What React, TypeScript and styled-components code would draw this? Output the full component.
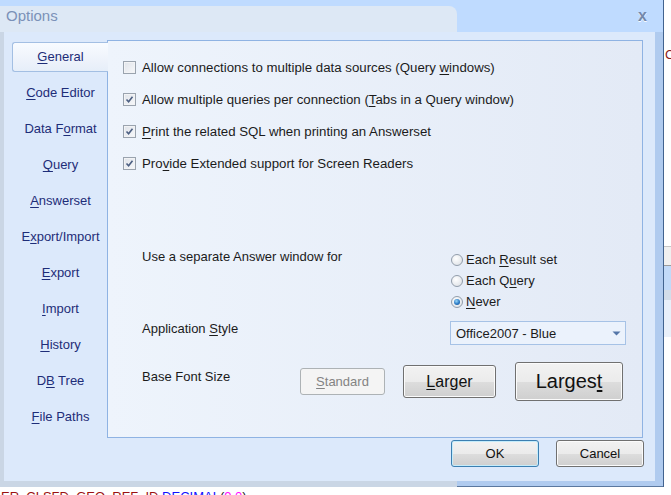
import React from "react";
import styled, { createGlobalStyle, css } from "styled-components";

const Global = createGlobalStyle`
  html, body { margin: 0; padding: 0; background: #fff; }
  body { font-family: "Liberation Sans", Arial, sans-serif; }
  #root { width: 671px; height: 495px; }
  u { text-decoration: underline; text-underline-offset: 2px; }
`;

const Page = styled.div`
  width: 671px;
  height: 495px;
  overflow: hidden;
  background: #fff;
  display: grid;
  grid-template-columns: 664px 7px;
  grid-template-rows: 487px 8px;
`;

const Dialog = styled.div`
  grid-column: 1;
  grid-row: 1;
  display: flex;
  flex-direction: column;
  border-right: 1px solid #42638f;
  box-sizing: border-box;
`;

const TitleBar = styled.div`
  height: 32px;
  flex: none;
  display: flex;
  align-items: flex-end;
  background: #bfdbff;
`;

const Caption = styled.div`
  width: 457px;
  height: 26px;
  box-sizing: border-box;
  padding-left: 6px;
  background: #dde8f5;
  border-top-right-radius: 8px;
  font-size: 15px;
  line-height: 20px;
  color: #7b91b8;
`;

const Close = styled.div`
  margin-left: auto;
  margin-right: 16px;
  align-self: center;
  font-size: 16px;
  font-weight: bold;
  line-height: 16px;
  color: #7388aa;
  text-shadow: 0 1px 0 rgba(255, 255, 255, 0.9);
`;

const Body = styled.div`
  flex: 1;
  display: flex;
  flex-direction: column;
  background: #dce9fb;
  border-left: 4px solid #cad6e5;
  border-right: 8px solid #b0cbef;
`;

const Footer = styled.div`
  height: 6px;
  flex: none;
  display: flex;
`;

const FooterPart = styled.div<{ $side: "left" | "right" }>`
  ${(p) =>
    p.$side === "left"
      ? css`
          width: 457px;
          background: #cad6e5;
        `
      : css`
          flex: 1;
          background: #b0cbef;
          border-bottom: 1px solid #5b789f;
        `}
`;

const Main = styled.div`
  display: flex;
  padding: 8px 12px 0 8px;
`;

const TabList = styled.div`
  width: 96px;
  margin-right: -1px;
  position: relative;
  z-index: 1;
  display: flex;
  flex-direction: column;
  padding-top: 2px;
`;

const Tab = styled.div<{ $active?: boolean }>`
  height: 30px;
  margin-bottom: 6px;
  box-sizing: border-box;
  text-align: center;
  font-size: 13px;
  line-height: 28px;
  color: #1e2d78;
  border: 1px solid transparent;
  border-right: none;
  border-radius: 3px 0 0 3px;
  ${(p) =>
    p.$active &&
    css`
      border-color: #a3bfe3;
      background: linear-gradient(180deg, #f8fbff 0%, #eef3fb 60%, #e6eef9 100%);
    `}
`;

const Panel = styled.div`
  width: 536px;
  height: 398px;
  box-sizing: border-box;
  border: 1px solid #8fb3e3;
  background: linear-gradient(90deg, #eef4fc 0%, #e3eaf6 100%);
  display: flex;
  flex-direction: column;
  padding: 10px 0 0 15px;
`;

const CheckList = styled.div`
  display: flex;
  flex-direction: column;
`;

const CheckRow = styled.div`
  height: 32px;
  display: flex;
  align-items: center;
  gap: 6px;
  font-size: 13.25px;
  color: #1b1b1b;
`;

const Box = styled.span`
  width: 13px;
  height: 13px;
  box-sizing: border-box;
  border: 1px solid #9aa3ae;
  background: linear-gradient(135deg, #dfe3e9 0%, #f7f8fa 100%);
  box-shadow: inset 0 0 0 1px #f2f3f5;
  display: flex;
  align-items: center;
  justify-content: center;
  flex: none;
`;

const FieldRow = styled.div<{ $top: number; $h?: number }>`
  display: flex;
  align-items: flex-start;
  margin-left: 19px;
  margin-top: ${(p) => p.$top}px;
  ${(p) => p.$h && css`height: ${p.$h}px; align-items: center;`}
`;

const FieldLabel = styled.div<{ $w: number; $offset?: number }>`
  width: ${(p) => p.$w}px;
  flex: none;
  align-self: flex-start;
  margin-top: ${(p) => p.$offset ?? 0}px;
  font-size: 13px;
  line-height: 16px;
  color: #1b1b1b;
`;

const RadioGroup = styled.div`
  display: flex;
  flex-direction: column;
  margin-left: 1px;
`;

const RadioItem = styled.div`
  height: 21px;
  display: flex;
  align-items: center;
  gap: 3px;
  font-size: 13px;
  color: #1b1b1b;
`;

const RadioDot = styled.span<{ $on?: boolean }>`
  width: 12px;
  height: 12px;
  box-sizing: border-box;
  border-radius: 50%;
  border: 1px solid #929dab;
  background: radial-gradient(circle at 40% 35%, #ffffff 0%, #e4e7eb 70%, #d2d6dc 100%);
  display: flex;
  align-items: center;
  justify-content: center;
  flex: none;
  &::after {
    content: "";
    width: 6px;
    height: 6px;
    border-radius: 50%;
    display: ${(p) => (p.$on ? "block" : "none")};
    background: radial-gradient(circle at 40% 35%, #9ad8fb 0%, #2a79c4 55%, #164f8f 100%);
  }
`;

const Select = styled.div`
  width: 176px;
  height: 24px;
  box-sizing: border-box;
  border: 1px solid #a6c2e6;
  background: #ebf2fc;
  display: flex;
  align-items: center;
  padding: 0 4px 0 5px;
  font-size: 13px;
  color: #1b1b1b;
  justify-content: space-between;
`;

const Button = styled.button<{ $w: number; $h: number; $fs?: number; $kind?: "default" | "disabled" }>`
  width: ${(p) => p.$w}px;
  height: ${(p) => p.$h}px;
  margin: 0;
  padding: 0;
  box-sizing: border-box;
  font-family: "Liberation Sans", Arial, sans-serif;
  font-size: ${(p) => p.$fs ?? 13}px;
  color: #111;
  border: 1px solid #707070;
  border-radius: 3px;
  background: linear-gradient(180deg, #f2f2f2 0%, #ebebeb 50%, #dddddd 51%, #cfcfcf 100%);
  box-shadow: inset 0 0 0 1px #fbfbfb;
  flex: none;
  ${(p) =>
    p.$kind === "default" &&
    css`
      border-color: #3c7fb1;
      box-shadow: inset 0 0 0 1px #c4ecfb;
    `}
  ${(p) =>
    p.$kind === "disabled" &&
    css`
      border-color: #adb2b5;
      background: #f4f4f4;
      box-shadow: none;
      color: #838383;
    `}
`;

const FontButtons = styled.div`
  display: flex;
  align-items: center;
`;

const Spacer = styled.div<{ $w: number }>`
  width: ${(p) => p.$w}px;
  flex: none;
`;

const ButtonBar = styled.div`
  display: flex;
  justify-content: flex-end;
  gap: 17px;
  padding: 2px 11px 0 0;
`;

const Sliver = styled.div`
  grid-column: 2;
  grid-row: 1;
  background: #fff;
  overflow: hidden;
  display: flex;
  flex-direction: column;
`;

const SliverText = styled.div`
  margin-top: 47px;
  height: 15px;
  font-size: 13px;
  line-height: 15px;
  color: #8b1a1a;
  padding-left: 1px;
`;

const SliverBlock = styled.div<{ $top?: number; $h: number; $bg: string; $line?: boolean }>`
  margin-top: ${(p) => p.$top ?? 0}px;
  height: ${(p) => p.$h}px;
  background: ${(p) => p.$bg};
  box-sizing: border-box;
  ${(p) =>
    p.$line &&
    css`
      border-top: 1px solid #c6c6c6;
      border-bottom: 1px solid #9c9c9c;
    `}
`;

const CodeLine = styled.div`
  grid-column: 1 / span 2;
  grid-row: 2;
  overflow: hidden;
  white-space: nowrap;
  font-size: 13px;
  line-height: 15px;
  padding: 2px 0 0 1px;
  background: #fff;
`;

const Tok = styled.span<{ $c: string }>`
  color: ${(p) => p.$c};
`;

const Check = () => (
  <svg width="9" height="9" viewBox="0 0 9 9">
    <path d="M1.5 4.5 L3.6 6.8 L7.5 1.8" fill="none" stroke="#4c5f82" strokeWidth="1.6" />
  </svg>
);

const Arrow = () => (
  <svg width="9" height="5" viewBox="0 0 9 5">
    <path d="M0.5 0.5 L8.5 0.5 L4.5 4.5 Z" fill="#5476a8" />
  </svg>
);

const tabs: React.ReactNode[] = [
  <><u>G</u>eneral</>,
  <><u>C</u>ode Editor</>,
  <>Data F<u>o</u>rmat</>,
  <><u>Q</u>uery</>,
  <><u>A</u>nswerset</>,
  <>E<u>x</u>port/Import</>,
  <><u>E</u>xport</>,
  <><u>I</u>mport</>,
  <><u>H</u>istory</>,
  <>D<u>B</u> Tree</>,
  <><u>F</u>ile Paths</>,
];

const checks: { on: boolean; label: React.ReactNode }[] = [
  { on: false, label: <>Allow connections to multiple data sources (Query <u>w</u>indows)</> },
  { on: true, label: <>Allow multiple queries per connection (<u>T</u>abs in a Query window)</> },
  { on: true, label: <><u>P</u>rint the related SQL when printing an Answerset</> },
  { on: true, label: <>Pro<u>v</u>ide Extended support for Screen Readers</> },
];

export default function App() {
  return (
    <>
      <Global />
      <Page>
        <Dialog>
          <TitleBar>
            <Caption>Options</Caption>
            <Close>x</Close>
          </TitleBar>
          <Body>
            <Main>
              <TabList>
                {tabs.map((t, i) => (
                  <Tab key={i} $active={i === 0}>
                    {t}
                  </Tab>
                ))}
              </TabList>
              <Panel>
                <CheckList>
                  {checks.map((c, i) => (
                    <CheckRow key={i}>
                      <Box>{c.on && <Check />}</Box>
                      <span>{c.label}</span>
                    </CheckRow>
                  ))}
                </CheckList>
                <FieldRow $top={70}>
                  <FieldLabel $w={308}>Use a separate Answer window for</FieldLabel>
                  <RadioGroup>
                    <RadioItem>
                      <RadioDot />
                      <span>Each <u>R</u>esult set</span>
                    </RadioItem>
                    <RadioItem>
                      <RadioDot />
                      <span>Each Q<u>u</u>ery</span>
                    </RadioItem>
                    <RadioItem>
                      <RadioDot $on />
                      <span><u>N</u>ever</span>
                    </RadioItem>
                  </RadioGroup>
                </FieldRow>
                <FieldRow $top={9}>
                  <FieldLabel $w={308}>Application <u>S</u>tyle</FieldLabel>
                  <Select>
                    <span>Office2007 - Blue</span>
                    <Arrow />
                  </Select>
                </FieldRow>
                <FieldRow $top={17} $h={39}>
                  <FieldLabel $w={158} $offset={7}>Base Font Size</FieldLabel>
                  <FontButtons>
                    <Button $w={85} $h={27} $kind="disabled"><u>S</u>tandard</Button>
                    <Spacer $w={18} />
                    <Button $w={93} $h={33} $fs={16}><u>L</u>arger</Button>
                    <Spacer $w={19} />
                    <Button $w={108} $h={39} $fs={20}>Larges<u>t</u></Button>
                  </FontButtons>
                </FieldRow>
              </Panel>
            </Main>
            <ButtonBar>
              <Button $w={88} $h={27} $kind="default">OK</Button>
              <Button $w={88} $h={27}>Cancel</Button>
            </ButtonBar>
          </Body>
          <Footer>
            <FooterPart $side="left" />
            <FooterPart $side="right" />
          </Footer>
        </Dialog>
        <Sliver>
          <SliverText>C</SliverText>
          <SliverBlock $top={184} $h={20} $bg="#f0f0f0" $line />
          <SliverBlock $h={24} $bg="#c2daf8" />
          <SliverBlock $h={10} $bg="#d3dde9" />
          <SliverBlock $h={37} $bg="#e9f0fa" />
        </Sliver>
        <CodeLine>
          <Tok $c="#9b1111">ER_CLSFD_GEO_REF_ID </Tok>
          <Tok $c="#1010ff">DECIMAL</Tok>
          <Tok $c="#202020">(</Tok>
          <Tok $c="#ff10ff">9,0</Tok>
          <Tok $c="#202020">),</Tok>
        </CodeLine>
      </Page>
    </>
  );
}
